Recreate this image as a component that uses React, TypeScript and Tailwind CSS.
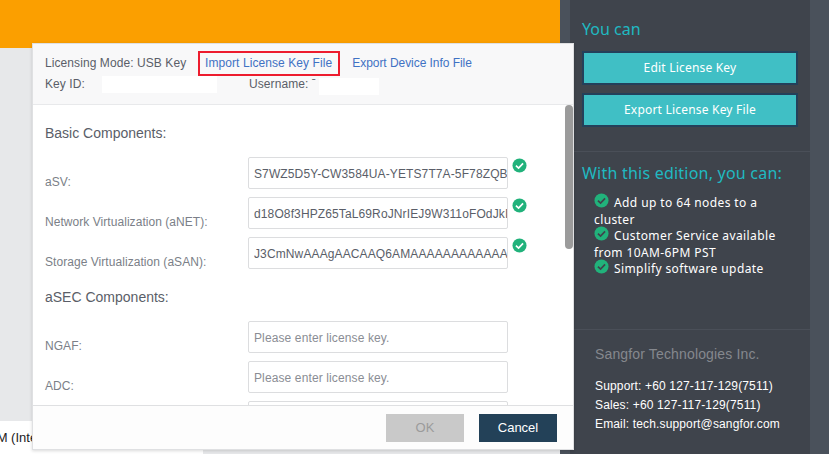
const CheckIcon = ({ className = "", tick = "#ffffff" }: { className?: string; tick?: string }) => (
  <svg viewBox="0 0 16 16" className={className}>
    <circle cx="8" cy="8" r="7.5" fill="#21b27b" />
    <path d="M4.2 8.2 L7 10.8 L11.8 5.8" fill="none" stroke={tick} strokeWidth="1.8" />
  </svg>
);

const licenseRows = [
  { label: "aSV:", value: "S7WZ5D5Y-CW3584UA-YETS7T7A-5F78ZQBX-QKR2", ok: true },
  { label: "Network Virtualization (aNET):", value: "d18O8f3HPZ65TaL69RoJNrIEJ9W311oFOdJkIvP2aQ", ok: true },
  { label: "Storage Virtualization (aSAN):", value: "J3CmNwAAAgAACAAQ6AMAAAAAAAAAAAAAAAAAAAAAAA", ok: true },
];

const secRows = ["NGAF:", "ADC:", "SSL VPN:"];

const features = [
  "Add up to 64 nodes to a cluster",
  "Customer Service available from 10AM-6PM PST",
  "Simplify software update",
];

const KeyRow = ({ label, value, ok }: { label: string; value?: string; ok?: boolean }) => (
  <div className="flex h-[32px] mb-2 shrink-0">
    <div className="w-[203px] shrink-0 pt-[16px] text-[12px] leading-[18px] tracking-[0.05px] text-[#7b7f88] whitespace-nowrap">{label}</div>
    <input
      readOnly
      value={value ?? ""}
      placeholder="Please enter license key."
      className="w-[260px] h-[32px] shrink-0 rounded-[2px] border border-[#dcdddf] bg-white pl-[5px] pt-[1px] text-[12px] tracking-[0.12px] text-[#5a5e68] placeholder:text-[#8a8d94] outline-none"
    />
    {ok && <CheckIcon className="w-[15px] h-[15px] ml-[4px] mt-[1px] shrink-0" />}
  </div>
);

export default function App() {
  return (
    <div className="relative flex w-[829px] h-[454px] overflow-hidden bg-[#4a515b] font-['Liberation_Sans',sans-serif]">
      {/* Page behind the dialog */}
      <div className="w-[560px] h-full shrink-0 flex flex-col bg-[#e7e8ea]">
        <div className="h-[48px] bg-[#fb9f00]" />
        <div className="flex-1" />
        <div className="h-[33px] w-[203px] bg-white overflow-hidden pt-[8px] text-[13px] leading-[18px] text-[#222] whitespace-nowrap">
          <span className="-ml-[12px] inline-block">VM (Intel</span>
        </div>
      </div>

      {/* Right sidebar */}
      <div className="ml-[10px] w-[240px] h-full bg-[#3f444c] flex flex-col font-['Noto_Sans',sans-serif]">
        <div className="h-[152px] border-b border-[#4a4f58] pl-[12px] pr-[12px] shrink-0">
          <div className="pt-[18px] text-[16px] leading-[22px] text-[#1fb9c1]">You can</div>
          <button className="mt-[11px] w-[216px] h-[34px] border-2 border-[#24405a] bg-[#40bfc5] text-[12px] tracking-[0.2px] text-white">Edit License Key</button>
          <button className="mt-[8px] w-[216px] h-[34px] border-2 border-[#24405a] bg-[#40bfc5] text-[12px] tracking-[0.2px] text-white">Export License Key File</button>
        </div>
        <div className="h-[178px] border-b border-[#4a4f58] shrink-0">
          <div className="pl-[12px] pt-[10px] text-[16px] leading-[22px] tracking-[0.22px] text-[#1fb9c1]">With this edition, you can:</div>
          <ul className="mt-[9px] ml-[24px] w-[187px] text-[12px] leading-[17px] tracking-[0.4px] text-white">
            {features.map((f) => (
              <li key={f} className="-mb-[2px]">
                <CheckIcon className="inline-block w-[15px] h-[15px] mr-[5px] align-[-1px]" tick="#3f444c" />
                {f}
              </li>
            ))}
          </ul>
        </div>
        <div className="pl-[25px] font-['Liberation_Sans',sans-serif]">
          <div className="pt-[15px] text-[14px] leading-[18px] tracking-[0.15px] text-[#85888e]">Sangfor Technologies Inc.</div>
          <div className="mt-[14px] text-[12px] leading-[19px] tracking-[0.15px] text-white">
            <div>Support: +60 127-117-129(7511)</div>
            <div>Sales: +60 127-117-129(7511)</div>
            <div>Email: tech.support@sangfor.com</div>
          </div>
        </div>
      </div>

      {/* License dialog */}
      <div className="absolute left-[32px] top-[43px] w-[542px] h-[407px] flex flex-col bg-white border border-[#dfe0e2] shadow-[0_1px_3px_rgba(0,0,0,0.15)]">
        <div className="h-[61px] shrink-0 bg-[#f8f8f9] border-b border-[#e8e9eb] pl-[12px] text-[12px] tracking-[0.08px] text-[#5a5e68]">
          <div className="flex items-center h-[24px] mt-[7px]">
            <span className="w-[153px] shrink-0">Licensing Mode: USB Key</span>
            <span className="h-[25px] flex items-center border-2 border-[#ed1c2e] pl-[5px] pr-[6px] text-[#3f72c4]">Import License Key File</span>
            <span className="ml-[12px] text-[#3f72c4] tracking-[-0.05px]">Export Device Info File</span>
          </div>
          <div className="flex h-[18px] mt-[1px]">
            <span className="w-[57px] shrink-0 -mt-[1px]">Key ID:</span>
            <span className="w-[115px] h-[17px] bg-white shrink-0" />
            <span className="ml-[32px] shrink-0 -mt-[1px]">Username: ˉ</span>
            <span className="ml-[3px] mt-[2px] w-[60px] h-[17px] bg-white" />
          </div>
        </div>

        <div className="relative flex-1 min-h-0 overflow-hidden pl-[12px]">
          <div className="pt-[19px] text-[14px] leading-[18px] text-[#5a5e68]">Basic Components:</div>
          <div className="mt-[15px]">
            {licenseRows.map((r) => (
              <KeyRow key={r.label} {...r} />
            ))}
          </div>
          <div className="mt-[19px] mb-[15px] text-[14px] leading-[18px] text-[#5a5e68]">aSEC Components:</div>
          {secRows.map((l) => (
            <KeyRow key={l} label={l} />
          ))}
          {/* scrollbar thumb */}
          <div className="absolute right-0 top-0 w-[8px] h-[144px] rounded-[4px] bg-[#9b9b9b]" />
        </div>

        <div className="h-[44px] shrink-0 flex justify-end items-start gap-[15px] pt-[8px] pr-[16px] bg-[#fdfdfd] border-t border-[#dfe0e2]">
          <button className="w-[78px] h-[28px] bg-[#c9c9c9] text-[13px] text-[#9b9b9b]">OK</button>
          <button className="w-[78px] h-[28px] bg-[#234158] text-[13px] text-white">Cancel</button>
        </div>
      </div>
    </div>
  );
}
